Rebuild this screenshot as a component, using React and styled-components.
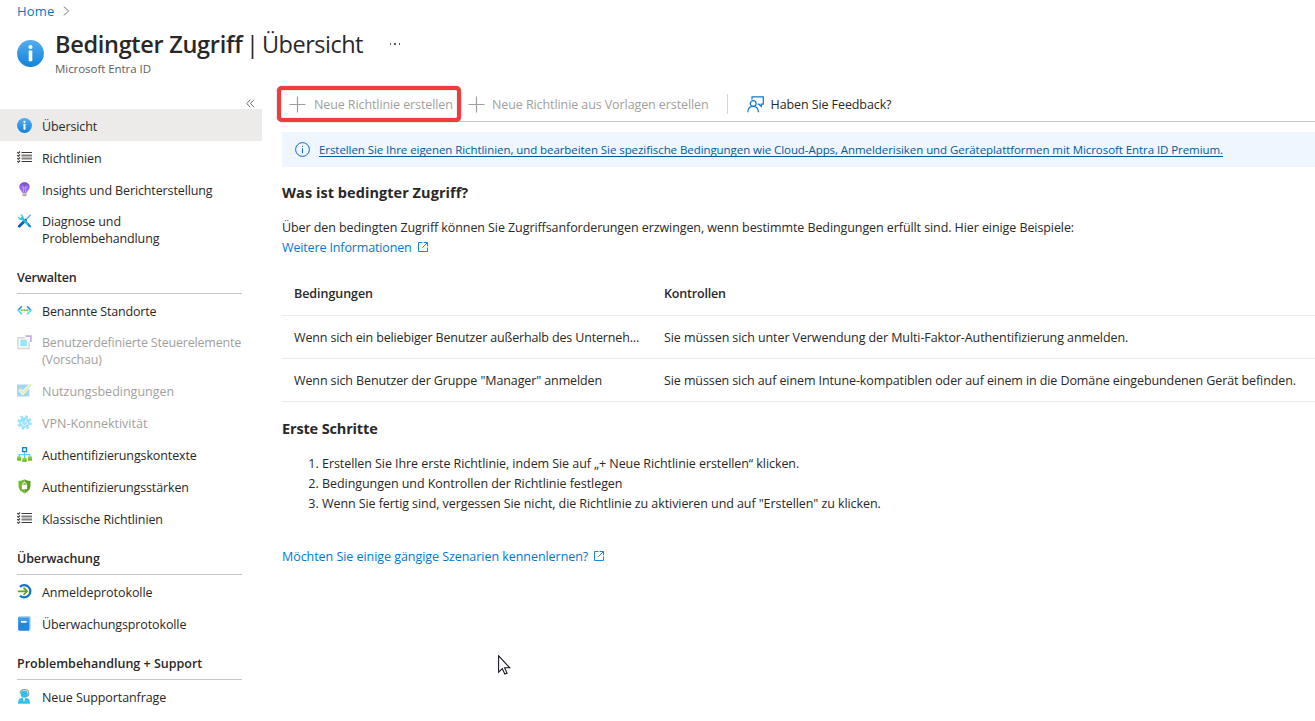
import React from 'react';
import styled, { createGlobalStyle } from 'styled-components';

const Global = createGlobalStyle`
  * { box-sizing: border-box; }
  body {
    margin: 0;
    background: #fff;
    color: #292827;
    font-family: "Open Sans", "Noto Sans", sans-serif;
    font-size: 12.5px;
    overflow: hidden;
  }
  svg { display: block; flex: none; }
`;

const Page = styled.div`
  width: 1315px;
  height: 721px;
  overflow: hidden;
  display: flex;
  flex-direction: column;
`;

const Fit = styled.span`
  letter-spacing: ${(p) => p.$ls || 0}px;
  white-space: nowrap;
`;

const Breadcrumb = styled.nav`
  display: flex;
  align-items: center;
  gap: 8px;
  height: 22px;
  padding-left: 17px;
  font-size: 13px;
  color: #0078d4;
`;

const Header = styled.header`
  display: flex;
  height: 64px;
  padding: 18px 0 0 17px;
`;

const HeaderText = styled.div`
  margin: -11px 0 0 11px;
`;

const TitleRow = styled.div`
  display: flex;
  align-items: center;
  height: 30px;
`;

const Title = styled.h1`
  margin: 0;
  font-size: 23.5px;
  line-height: 30px;
  font-weight: 400;
  white-space: nowrap;
  b { font-weight: 600; }
`;

const TitleSection = styled(Fit)`
  word-spacing: -2px;
`;

const MoreDots = styled.div`
  display: flex;
  gap: 3px;
  margin-left: 27px;
  i { width: 1.5px; height: 1.5px; background: #605e5c; }
`;

const Subtitle = styled.div`
  margin-top: 2px;
  font-size: 11.5px;
  line-height: 16px;
  color: #605e5c;
`;

const Body = styled.div`
  display: flex;
  flex: 1;
  min-height: 0;
`;

const Sidebar = styled.aside`
  width: 262px;
  flex: none;
`;

const CollapseBar = styled.div`
  display: flex;
  justify-content: flex-end;
  align-items: flex-end;
  height: 23px;
  padding: 0 7px 1px 0;
`;

const NavItem = styled.div`
  display: flex;
  padding: ${(p) => (p.$tall ? 7 : 8) + (p.$low ? 1 : 0)}px 0 0 17px;
  height: ${(p) => (p.$tall ? 48 : 32)}px;
  line-height: 17px;
  background: ${(p) => (p.$active ? '#edebe9' : 'transparent')};
  color: ${(p) => (p.$disabled ? '#a19f9d' : '#292827')};
  svg { margin-right: 10px; opacity: ${(p) => (p.$disabled ? 0.42 : 1)}; }
`;

const NavHeading = styled.h3`
  margin: ${(p) => p.$top || 0}px 20px 1px 17px;
  height: 40px;
  padding-top: 15px;
  border-bottom: 1px solid #c8c6c4;
  font-size: 12.5px;
  line-height: 17px;
  font-weight: 600;
`;

const Main = styled.main`
  flex: 1;
  min-width: 0;
  padding-left: 20px;
`;

const Toolbar = styled.div`
  display: flex;
  align-items: center;
  height: 36px;
  border-bottom: 1px solid #c8c6c4;
`;

const Command = styled.div`
  display: flex;
  align-items: center;
  gap: 7px;
  color: ${(p) => (p.$disabled ? '#a19f9d' : '#292827')};
  height: 36px;
  padding-top: 1px;
`;

const HighlightedCommand = styled(Command)`
  gap: 8px;
  width: 184px;
  margin: 1px 7px 0 -5px;
  padding: 0 0 0 8px;
  border: 4px solid #f23b3c;
  border-radius: 5px;
  background: #fff;
  box-shadow: 0 0 1px rgba(0, 0, 0, 0.7), inset 0 0 1px rgba(0, 0, 0, 0.6);
`;

const Separator = styled.div`
  width: 1px;
  height: 20px;
  margin: 0 19px 0 18px;
  background: #d8d6d4;
`;

const Banner = styled.div`
  display: flex;
  align-items: center;
  gap: 9px;
  height: 35px;
  margin-top: 10px;
  padding-left: 13px;
  background: #eff6ff;
  font-size: 11.5px;
  color: #005a9e;
  a { text-decoration: underline; text-underline-offset: 2px; text-decoration-skip-ink: none; }
`;

const SectionTitle = styled.h2`
  margin: ${(p) => p.$top}px 0 0;
  font-size: 14.5px;
  line-height: 20px;
  font-weight: 700;
`;

const Paragraph = styled.p`
  margin: 15px 0 0;
  line-height: 20px;
`;

const ExternalLink = styled.a`
  display: flex;
  align-items: center;
  gap: 6px;
  height: 20px;
  margin-top: ${(p) => p.$top || 0}px;
  color: #0078d4;
`;

const Table = styled.div`
  margin-top: 15px;
`;

const Row = styled.div`
  display: grid;
  grid-template-columns: 370px 1fr;
  align-items: center;
  height: ${(p) => (p.$head ? 44 : 43)}px;
  padding-left: 12px;
  border-bottom: 1px solid #edebe9;
  font-weight: ${(p) => (p.$head ? 600 : 400)};
`;

const Steps = styled.ol`
  margin: 15px 0 0;
  padding-left: 40px;
  line-height: 20px;
`;

const Pointer = styled.svg`
  position: absolute;
  left: 498px;
  top: 655px;
`;

const InfoIcon = ({ size }) => (
  <svg width={size} height={size} viewBox="0 0 27 27">
    <defs>
      <linearGradient id={'info' + size} x1="0" y1="0" x2="0" y2="1">
        <stop offset="0" stopColor="#53adf0" />
        <stop offset="1" stopColor="#1383d9" />
      </linearGradient>
    </defs>
    <circle cx="13.5" cy="13.5" r="13.4" fill={`url(#info${size})`} />
    <circle cx="13.5" cy="7" r="2" fill="#fff" />
    <rect x="11.7" y="10.5" width="3.6" height="10.7" rx="0.8" fill="#fff" />
  </svg>
);

const ListIcon = () => (
  <svg width="15" height="15" viewBox="0 0 15 15" fill="none">
    <path d="M4.5 2.5H15M4.5 11.5H15" stroke="#3b3a39" strokeWidth="1.1" />
    <path d="M4.5 5.5H15M4.5 8.5H15" stroke="#807e7c" strokeWidth="1.8" />
    <path d="M.2 2.200l1.200 1L3 1.500M.2 5.200l1.200 1L3 4.500M.2 8.200l1.200 1L3 7.500M.2 11.200l1.200 1L3 10.500" stroke="#3b3a39" strokeWidth="1.1" />
  </svg>
);

const BulbIcon = () => (
  <svg width="15" height="15" viewBox="0 0 15 15">
    <defs>
      <linearGradient id="bulb" x1="0" y1="0" x2="0" y2="1">
        <stop offset="0" stopColor="#7a48cf" />
        <stop offset="1" stopColor="#a67af0" />
      </linearGradient>
    </defs>
    <path d="M7.500.3C4.500.3 2.300 2.400 2.300 5c0 2.600 2.600 3.600 3 6h4.400c.4-2.400 3-3.400 3-6 0-2.600-2.200-4.700-5.200-4.700z" fill="url(#bulb)" />
    <path d="M6.500 10.500V6M8.500 10.500V6M6.500 6c-2.200.2-2-2.300-.8-2 .9.300.8 2 .8 2h2s-.1-1.700.8-2c1.200-.3 1.400 2.200-.8 2" fill="none" stroke="#cbb2f5" strokeWidth="0.700" />
    <path d="M5.500 11.300h4v1.900l-.8 1.100H6.300l-.8-1.100z" fill="#b3b0ad" />
  </svg>
);

const ToolsIcon = () => (
  <svg width="15" height="15" viewBox="0 -0.6 15 15" fill="none">
    <path d="M13.600 1.200L9 6" stroke="#69afe5" strokeWidth="1.500" />
    <path d="M8.400 6.600L2.300 12.700" stroke="#0f62a8" strokeWidth="2.800" strokeLinecap="round" />
    <path d="M5 4.500l7.700 8" stroke="#2bb4e0" strokeWidth="2.400" strokeLinecap="round" />
    <path d="M3.200 1L4.700 2.600 4.400 4.100 2.900 4.400 1.200 2.900C.8 5 2.200 6.600 4.600 6.300L6.400 4.700C7 2.500 5.500.600 3.200 1z" fill="#32c5ea" />
    <path d="M10.500 10.200l1.200 3 1.800.8.600-.600-.8-1.800-2.200-2z" fill="#1c8fcf" />
  </svg>
);

const LocationsIcon = () => (
  <svg width="15" height="15" viewBox="0 -0.5 15 15" fill="none" strokeWidth="1.500">
    <path d="M4.800 2.800L.9 7" stroke="#1f8be0" />
    <path d="M.9 6.600l3.900 4.200" stroke="#44dcf5" />
    <path d="M10.200 2.800L14.100 7" stroke="#1f8be0" />
    <path d="M14.100 6.600l-3.900 4.200" stroke="#44dcf5" />
    <path d="M3.600 6.800h7.800" stroke="#76bc2d" strokeWidth="0.6" />
    <circle cx="4.600" cy="6.800" r="1" fill="#76bc2d" />
    <circle cx="7.500" cy="6.800" r="1" fill="#76bc2d" />
    <circle cx="10.400" cy="6.800" r="1" fill="#76bc2d" />
  </svg>
);

const CustomControlsIcon = () => (
  <svg width="15" height="16" viewBox="0 -1 15 16">
    <path d="M8 2.700H1v10.800h11V7" fill="none" stroke="#a3a1a0" strokeWidth="1.500" />
    <rect x="3.300" y="4.500" width="6.600" height="6.800" fill="#0cc4ee" />
    <path d="M8.500 1.200h5.400v5.900" fill="none" stroke="#773adc" strokeWidth="1.700" />
  </svg>
);

const TermsIcon = () => (
  <svg width="15" height="15" viewBox="0 0 15 15" fill="none">
    <rect x="0" y="1.500" width="12.300" height="12" fill="#2f9fd4" />
    <path d="M2.300 6.300l3.500 3.600 8.300-8.600" stroke="#fff" strokeWidth="3.300" />
    <path d="M2.300 6.300l3.500 3.600 8.300-8.600" stroke="#b4d53a" strokeWidth="1.800" />
  </svg>
);

const GearIcon = () => (
  <svg width="15" height="15" viewBox="0 0 15 15" fill="none">
    <circle cx="7.500" cy="7.500" r="5.300" fill="#0bbdf3" />
    <circle cx="7.500" cy="7.500" r="6.100" stroke="#0bbdf3" strokeWidth="2.200" strokeDasharray="2.500 2.290" />
    <path d="M5 6.500A2.800 2.800 0 1 0 10.200 7M7.600 7.600l2-2.800" stroke="#fff" strokeWidth="1" />
  </svg>
);

const ContextIcon = () => (
  <svg width="15" height="15" viewBox="0 0 15 15" fill="none">
    <path d="M7.500 5v6M2.200 10V7.600h10.600V10" stroke="#50d5f2" strokeWidth="1.300" />
    <rect x="5.600" y="0.700" width="3.900" height="3.900" fill="#fff" stroke="#1180dc" strokeWidth="1.300" />
    <path d="M0 9.400h4v4H0zM11 9.400h4v4h-4zM5.500 10.800h4v4h-4z" fill="#86d633" />
    <path d="M0 11.400h4v2H0zM11 11.400h4v2h-4zM5.500 12.800h4v2h-4z" fill="#6dbd27" />
  </svg>
);

const ShieldIcon = () => (
  <svg width="15" height="15" viewBox="0 0 15 15">
    <path d="M7.500.3C5.800 1.600 3.800 1.900 1.500 2v4.700c0 3.800 3 6 6 7.700z" fill="#76b82c" />
    <path d="M7.500.3c1.700 1.300 3.700 1.600 6 1.700v4.700c0 3.800-3 6-6 7.700z" fill="#5b9f22" />
    <rect x="4.900" y="6" width="5.200" height="4.200" rx="0.500" fill="#fff" />
    <path d="M5.900 6.200V5c0-2.200 3.200-2.200 3.200 0v1.200" fill="none" stroke="#fff" strokeWidth="1" />
  </svg>
);

const SignInIcon = () => (
  <svg width="15" height="15" viewBox="0 0 15 15" fill="none">
    <path d="M3 2.900A6.100 6.100 0 1 1 3 11.700" stroke="#0f74c8" strokeWidth="2.200" />
    <path d="M.8 7.300H10M6.500 3.600l3.700 3.700-3.700 3.700" stroke="#5fa80f" strokeWidth="1.700" />
  </svg>
);

const BookIcon = () => (
  <svg width="15" height="15" viewBox="0 0 15 15">
    <path d="M2.500.3h10.200c.6 0 .9.300.9.900v12.400H2.500c-.8 0-1.300-.5-1.300-1.200V1.500c0-.7.5-1.200 1.300-1.200z" fill="#9ccbed" />
    <path d="M1.200 1.800h11v13H2.500c-.8 0-1.300-.5-1.300-1.200z" fill="#2388dc" />
    <path d="M1.200 1.800h11v5h-11z" fill="#3c9ce8" />
    <rect x="4" y="5" width="5.500" height="1.700" fill="#fff" />
  </svg>
);

const SupportIcon = () => (
  <svg width="15" height="15" viewBox="0 0 15 15">
    <path d="M1 14.700c0-4 1.500-6.200 6-6.200s6 2.200 6 6.200z" fill="#32c3e8" />
    <path d="M5.500 8.500L7 13l1.500-4.500z" fill="#fff" />
    <circle cx="7.200" cy="5" r="3.600" fill="#2bc0ea" />
    <path d="M3 4.500C3-.8 11.800-.8 11.800 4.600c0 2-.9 3-2.800 3.100" fill="none" stroke="#9b9997" strokeWidth="1.100" />
  </svg>
);

const PlusIcon = () => (
  <svg width="17" height="17" viewBox="0 0 17 17">
    <path d="M0.500 8.500h16M8.500 0.500v16" stroke="#a19f9d" strokeWidth="1.200" />
  </svg>
);

const FeedbackIcon = () => (
  <svg width="17" height="17" viewBox="0 0 17 17" fill="none" stroke="#0a78d4" strokeWidth="1.200">
    <path d="M5 3.500V.8h11.300v7.400h-2v2.200l-2.400-2.200h-1.300" />
    <circle cx="6.200" cy="7.500" r="2.900" />
    <path d="M.7 16.300c.2-3.400 2.300-5.900 5.500-5.900s5 2.300 5.300 5.900" />
  </svg>
);

const BannerInfoIcon = () => (
  <svg width="15" height="15" viewBox="0 0 15 15">
    <circle cx="7.500" cy="7.500" r="6.900" fill="none" stroke="#1266d8" strokeWidth="1" />
    <path d="M7.500 6.300v5M7.500 3.800v1.200" stroke="#1266d8" strokeWidth="1" />
  </svg>
);

const OpenIcon = () => (
  <svg width="10" height="10" viewBox="0 0 10 10" fill="none" stroke="#0078d4">
    <path d="M4.500.5h-4v9h9V5.500M5.700.5h3.800v3.800M9.300.7L4.300 5.700" strokeWidth="0.900" />
  </svg>
);

const Chevron = () => (
  <svg width="7" height="10" viewBox="0 0 7 10">
    <path d="M.7.500L5.700 5 .7 9.500" fill="none" stroke="#807e7c" />
  </svg>
);

const CollapseIcon = () => (
  <svg width="9" height="9" viewBox="0 0 9 9">
    <path d="M4.300.7L.8 4.500l3.500 3.800M8.100.7L4.600 4.500l3.500 3.800" fill="none" stroke="#605e5c" strokeWidth="0.900" />
  </svg>
);

const Item = ({ icon, ls = -0.12, children, ...rest }) => (
  <NavItem {...rest}>
    {icon}
    <Fit $ls={ls}>{children}</Fit>
  </NavItem>
);

export default function App() {
  return (
    <Page>
      <Global />
      <Breadcrumb>
        <Fit $ls={0.2}>Home</Fit>
        <Chevron />
      </Breadcrumb>
      <Header>
        <InfoIcon size={27} />
        <HeaderText>
          <TitleRow>
            <Title>
              <Fit as="b" $ls={-0.3}>Bedingter Zugriff</Fit>
              <TitleSection $ls={-0.5}> | Übersicht</TitleSection>
            </Title>
            <MoreDots><i /><i /><i /></MoreDots>
          </TitleRow>
          <Subtitle><Fit $ls={-0.05}>Microsoft Entra ID</Fit></Subtitle>
        </HeaderText>
      </Header>
      <Body>
        <Sidebar>
          <CollapseBar><CollapseIcon /></CollapseBar>
          <Item $active $low icon={<InfoIcon size={15} />}>Übersicht</Item>
          <Item $low icon={<ListIcon />}>Richtlinien</Item>
          <Item $low icon={<BulbIcon />}>Insights und Berichterstellung</Item>
          <Item $low $tall icon={<ToolsIcon />}>Diagnose und<br />Problembehandlung</Item>
          <NavHeading $top={1}><Fit $ls={-0.2}>Verwalten</Fit></NavHeading>
          <Item ls={-0.17} icon={<LocationsIcon />}>Benannte Standorte</Item>
          <Item ls={-0.2} $tall $disabled icon={<CustomControlsIcon />}>Benutzerdefinierte Steuerelemente<br />(Vorschau)</Item>
          <Item ls={0} $disabled icon={<TermsIcon />}>Nutzungsbedingungen</Item>
          <Item ls={0} $disabled icon={<GearIcon />}>VPN-Konnektivität</Item>
          <Item icon={<ContextIcon />}>Authentifizierungskontexte</Item>
          <Item ls={-0.14} icon={<ShieldIcon />}>Authentifizierungsstärken</Item>
          <Item icon={<ListIcon />}>Klassische Richtlinien</Item>
          <NavHeading><Fit $ls={-0.12}>Überwachung</Fit></NavHeading>
          <Item ls={-0.07} icon={<SignInIcon />}>Anmeldeprotokolle</Item>
          <Item icon={<BookIcon />}>Überwachungsprotokolle</Item>
          <NavHeading><Fit>Problembehandlung + Support</Fit></NavHeading>
          <Item ls={-0.09} icon={<SupportIcon />}>Neue Supportanfrage</Item>
        </Sidebar>
        <Main>
          <Toolbar>
            <HighlightedCommand $disabled>
              <PlusIcon />
              <Fit $ls={-0.1}>Neue Richtlinie erstellen</Fit>
            </HighlightedCommand>
            <Command $disabled>
              <PlusIcon />
              <Fit $ls={-0.09}>Neue Richtlinie aus Vorlagen erstellen</Fit>
            </Command>
            <Separator />
            <Command>
              <FeedbackIcon />
              <Fit $ls={-0.1}>Haben Sie Feedback?</Fit>
            </Command>
          </Toolbar>
          <Banner>
            <BannerInfoIcon />
            <Fit as="a" $ls={-0.07}>Erstellen Sie Ihre eigenen Richtlinien, und bearbeiten Sie spezifische Bedingungen wie Cloud-Apps, Anmelderisiken und Geräteplattformen mit Microsoft Entra ID Premium.</Fit>
          </Banner>
          <SectionTitle $top={16}><Fit $ls={0.05}>Was ist bedingter Zugriff?</Fit></SectionTitle>
          <Paragraph>
            <Fit $ls={-0.083}>Über den bedingten Zugriff können Sie Zugriffsanforderungen erzwingen, wenn bestimmte Bedingungen erfüllt sind. Hier einige Beispiele:</Fit>
          </Paragraph>
          <ExternalLink $top={-1}><Fit $ls={-0.14}>Weitere Informationen</Fit><OpenIcon /></ExternalLink>
          <Table>
            <Row $head><Fit $ls={-0.05}>Bedingungen</Fit><Fit $ls={-0.18}>Kontrollen</Fit></Row>
            <Row>
              <Fit $ls={-0.15}>Wenn sich ein beliebiger Benutzer außerhalb des Unterneh...</Fit>
              <Fit $ls={-0.09}>Sie müssen sich unter Verwendung der Multi-Faktor-Authentifizierung anmelden.</Fit>
            </Row>
            <Row>
              <Fit $ls={-0.11}>Wenn sich Benutzer der Gruppe "Manager" anmelden</Fit>
              <Fit $ls={-0.1}>Sie müssen sich auf einem Intune-kompatiblen oder auf einem in die Domäne eingebundenen Gerät befinden.</Fit>
            </Row>
          </Table>
          <SectionTitle $top={17}><Fit $ls={-0.15}>Erste Schritte</Fit></SectionTitle>
          <Steps>
            <li><Fit $ls={-0.07}>Erstellen Sie Ihre erste Richtlinie, indem Sie auf „+ Neue Richtlinie erstellen“ klicken.</Fit></li>
            <li><Fit $ls={-0.06}>Bedingungen und Kontrollen der Richtlinie festlegen</Fit></li>
            <li><Fit $ls={-0.08}>Wenn Sie fertig sind, vergessen Sie nicht, die Richtlinie zu aktivieren und auf "Erstellen" zu klicken.</Fit></li>
          </Steps>
          <ExternalLink $top={32}><Fit $ls={-0.05}>Möchten Sie einige gängige Szenarien kennenlernen?</Fit><OpenIcon /></ExternalLink>
        </Main>
      </Body>
      <Pointer width="13" height="20" viewBox="0 0 13 20">
        <path d="M.6.800v16.400l3.700-3.500 2.500 5.400 2.300-1-2.500-5.300h5.200z" fill="#fff" stroke="#1b1a2a" strokeWidth="1.100" />
      </Pointer>
    </Page>
  );
}
